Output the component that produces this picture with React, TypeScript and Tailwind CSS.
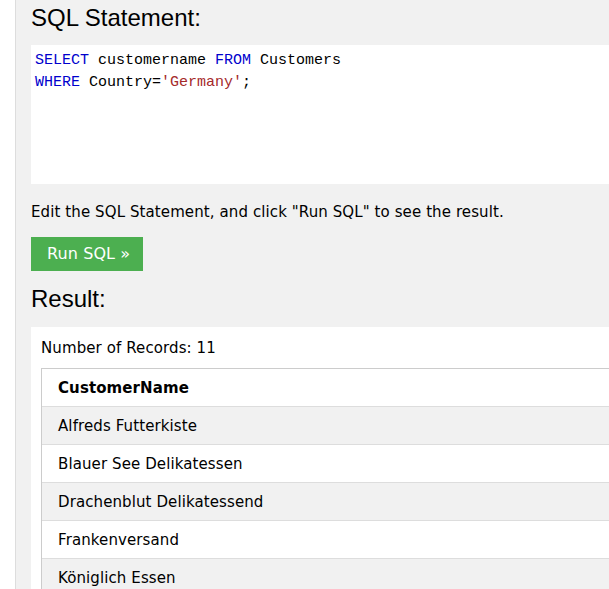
export default function App() {
  const rows = [
    "Alfreds Futterkiste",
    "Blauer See Delikatessen",
    "Drachenblut Delikatessend",
    "Frankenversand",
    "Königlich Essen",
  ];

  return (
    <div className="flex h-[589px] w-[609px] overflow-hidden bg-white font-['DejaVu_Sans',Verdana,sans-serif] text-[15px] tracking-[0.1px] text-black">
      {/* left gutter */}
      <div className="w-[15px] shrink-0 border-r border-[#dddddd] bg-white box-content" />

      {/* main area */}
      <div className="flex-1 min-w-0 bg-[#f1f1f1] pl-[15px] pt-[4px]">
        <h2 className="font-['Liberation_Sans',Arial,sans-serif] text-[24px] leading-[27.6px] tracking-normal">
          SQL Statement:
        </h2>

        {/* code editor */}
        <div className="mt-[13px] h-[139px] bg-white pl-[4px] pt-[5px] font-['Liberation_Mono','Courier_New',monospace] text-[15px] leading-[22px] tracking-normal whitespace-pre">
          <div>
            <span className="text-[#0000cd]">SELECT</span> customername{" "}
            <span className="text-[#0000cd]">FROM</span> Customers
          </div>
          <div>
            <span className="text-[#0000cd]">WHERE</span> Country=
            <span className="text-[#a52a2a]">'Germany'</span>;
          </div>
        </div>

        <p className="mt-[19px] leading-[18px]">
          Edit the SQL Statement, and click "Run SQL" to see the result.
        </p>

        <button className="mt-[16px] flex h-[34px] w-[112px] items-center whitespace-nowrap bg-[#4caf50] px-4 text-[16px] text-white">
          Run SQL »
        </button>

        <h2 className="mt-[14px] font-['Liberation_Sans',Arial,sans-serif] text-[24px] leading-[27.6px] tracking-normal">
          Result:
        </h2>

        {/* result panel */}
        <div className="mt-[15px] bg-white pl-[10px] pt-[12px] pb-4">
          <div className="leading-[18px]">Number of Records: 11</div>

          <div className="mt-[11px] border-l border-t border-[#cccccc]">
            <div className="flex h-[38px] items-center border-b border-[#dddddd] bg-white pl-4 pt-[2px] font-bold">
              CustomerName
            </div>
            {rows.map((name, i) => (
              <div
                key={name}
                className={
                  "flex h-[38px] items-center border-b border-[#dddddd] pl-4 pt-[2px] " +
                  (i % 2 === 0 ? "bg-[#f1f1f1]" : "bg-white")
                }
              >
                {name}
              </div>
            ))}
          </div>
        </div>
      </div>
    </div>
  );
}
